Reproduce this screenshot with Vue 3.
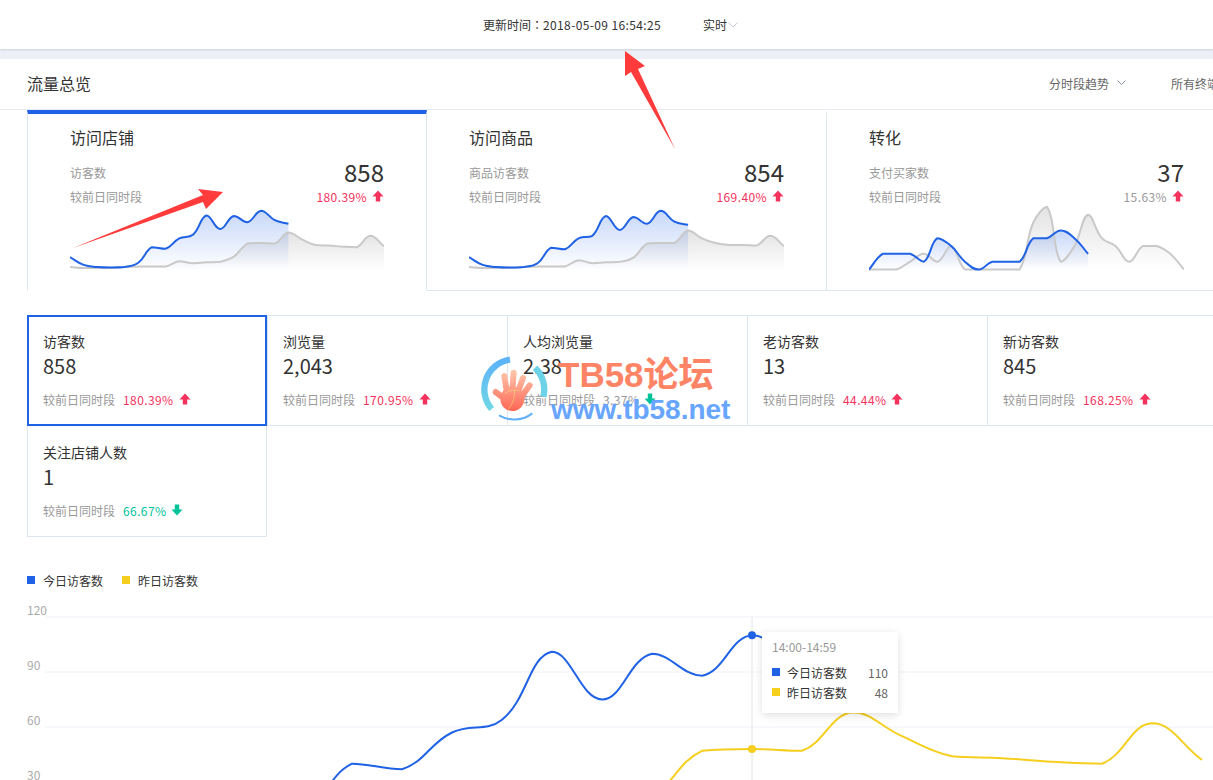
<script setup>
const blue = '#2062e6'
const gray = '#c9c9c9'
const yellow = '#f5ce1e'

// same kind of curve the charts on this page use: control points leaning on the
// neighbours, kept between them so flat runs stay flat
const smoothPath = (pts) => {
  const ctrl = pts.map((p, i) => {
    const prev = pts[i - 1] || p
    const next = pts[i + 1] || p
    const d0 = Math.hypot(p[0] - prev[0], p[1] - prev[1])
    const d1 = Math.hypot(p[0] - next[0], p[1] - next[1])
    const sum = d0 + d1 || 1
    const vx = (next[0] - prev[0]) * 0.42
    const vy = (next[1] - prev[1]) * 0.42
    const clamp = (v, a, b) => Math.min(Math.max(v, Math.min(a, b)), Math.max(a, b))
    return {
      a: [p[0] - (vx * d0) / sum, clamp(p[1] - (vy * d0) / sum, p[1], prev[1])],
      b: [p[0] + (vx * d1) / sum, clamp(p[1] + (vy * d1) / sum, p[1], next[1])],
    }
  })
  let d = `M${pts[0][0]} ${pts[0][1]}`
  for (let i = 1; i < pts.length; i++) {
    const c1 = ctrl[i - 1].b
    const c2 = ctrl[i].a
    d += ` C${c1[0].toFixed(1)} ${c1[1].toFixed(1)} ${c2[0].toFixed(1)} ${c2[1].toFixed(1)} ${pts[i][0].toFixed(1)} ${pts[i][1].toFixed(1)}`
  }
  return d
}

const area = (pts, base) =>
  `${smoothPath(pts)} L${pts[pts.length - 1][0].toFixed(1)} ${base} L${pts[0][0]} ${base} Z`

const sparkPts = (vals, base, scale) =>
  vals.map((v, i) => [(i * 315) / 23, base - v * scale])

const todayVisits = [21, 6, 2, 1, 2, 10, 40, 37, 57, 64, 101, 75, 100, 88, 110, 92, 85]
const prevVisits = [2, 0, 0, 0, 2, 3, 3, 3, 13, 9, 11, 12, 22, 47, 48, 47, 68, 55, 44, 43, 41, 40, 62, 42]

const cards = [
  {
    title: '访问店铺',
    label: '访客数',
    value: '858',
    pct: '180.39%',
    pctRed: true,
    active: true,
    base: 62,
    scale: 0.52,
    today: todayVisits,
    prev: prevVisits,
  },
  {
    title: '访问商品',
    label: '商品访客数',
    value: '854',
    pct: '169.40%',
    pctRed: true,
    active: false,
    base: 62,
    scale: 0.52,
    today: [21, 6, 2, 1, 2, 9, 39, 36, 57, 62, 100, 73, 98, 85, 110, 89, 83],
    prev: [2, 0, 0, 0, 2, 3, 3, 3, 15, 9, 11, 12, 20, 47, 48, 48, 72, 57, 48, 44, 44, 43, 62, 42],
  },
  {
    title: '转化',
    label: '支付买家数',
    value: '37',
    pct: '15.63%',
    pctRed: false,
    active: false,
    base: 63.5,
    scale: 7.83,
    today: [0, 2, 2, 2, 1, 4, 3, 1, 0, 1, 1, 1, 4, 4, 5, 4, 2],
    prev: [0, 0, 0, 1, 2, 1, 3, 0, 0, 0, 0, 0, 6, 8, 1, 3, 7, 4, 3, 1, 3, 3, 2, 0],
  },
].map((c) => {
  const t = sparkPts(c.today, c.base, c.scale)
  const p = sparkPts(c.prev, c.base, c.scale)
  return {
    ...c,
    line: smoothPath(t),
    fill: area(t, 64),
    prevLine: smoothPath(p),
    prevFill: area(p, 64),
  }
})

const metrics = [
  { name: '访客数', value: '858', pct: '180.39%', dir: 'up', active: true },
  { name: '浏览量', value: '2,043', pct: '170.95%', dir: 'up' },
  { name: '人均浏览量', value: '2.38', pct: '3.37%', dir: 'down', muted: true },
  { name: '老访客数', value: '13', pct: '44.44%', dir: 'up' },
  { name: '新访客数', value: '845', pct: '168.25%', dir: 'up' },
  { name: '关注店铺人数', value: '1', pct: '66.67%', dir: 'down' },
]

const chartY = (v) => 237 - v * 1.8333
const chartPts = (vals) => vals.map((v, i) => [52 + i * 50, chartY(v)])
const todayLine = smoothPath(chartPts(todayVisits))
const prevLine = smoothPath(chartPts(prevVisits))
const ticks = [120, 90, 60, 30]
</script>

<template>
  <div class="page">
    <header class="topbar">
      <span class="update">更新时间<span class="colon">：</span><span class="stamp-time">2018-05-09 16:54:25</span></span>
      <span class="mode">实时</span>
      <svg class="chev" width="10" height="6" viewBox="0 0 10 6">
        <path d="M0.5 0.5 L5 5 L9.5 0.5" fill="none" stroke="#c6ccd9" />
      </svg>
    </header>
    <div class="band"></div>

    <div class="sec-head">
      <span class="sec-title">流量总览</span>
      <span class="sec-opt trend">分时段趋势</span>
      <svg class="chev-dark" width="9" height="6" viewBox="0 0 9 6">
        <path d="M0.5 0.5 L4.5 4.5 L8.5 0.5" fill="none" stroke="#8a94a6" />
      </svg>
      <span class="sec-opt terminal">所有终端</span>
    </div>

    <div class="cards">
      <div v-for="(c, i) in cards" :key="c.title" class="card" :class="{ active: c.active }">
        <div class="card-title">{{ c.title }}</div>
        <div class="card-row">
          <span class="muted">{{ c.label }}</span>
          <span class="card-value">{{ c.value }}</span>
        </div>
        <div class="card-row small">
          <span class="muted">较前日同时段</span>
          <span class="pct" :class="c.pctRed ? 'red' : 'muted'">
            <span class="num">{{ c.pct }}</span>
            <svg class="dir" width="12" height="12" viewBox="0 0 12 12">
              <path d="M6 0.5 L11.5 6.5 L8.2 6.5 L8.2 11.5 L3.8 11.5 L3.8 6.5 L0.5 6.5 Z" fill="#f5325c" />
            </svg>
          </span>
        </div>
        <svg class="spark" viewBox="0 0 315 66" preserveAspectRatio="none">
          <defs>
            <linearGradient :id="'gb' + i" x1="0" y1="0" x2="0" y2="1">
              <stop offset="0" stop-color="#2062e6" stop-opacity="0.25" />
              <stop offset="1" stop-color="#2062e6" stop-opacity="0" />
            </linearGradient>
            <linearGradient :id="'gg' + i" x1="0" y1="0" x2="0" y2="1">
              <stop offset="0" stop-color="#000" stop-opacity="0.11" />
              <stop offset="1" stop-color="#000" stop-opacity="0" />
            </linearGradient>
          </defs>
          <path :d="c.prevFill" :fill="`url(#gg${i})`" />
          <path :d="c.fill" :fill="`url(#gb${i})`" />
          <path :d="c.prevLine" fill="none" :stroke="gray" stroke-width="2" />
          <path :d="c.line" fill="none" :stroke="blue" stroke-width="2" />
        </svg>
      </div>
    </div>

    <div class="metrics">
      <div
        v-for="(m, i) in metrics"
        :key="m.name"
        class="metric"
        :class="{ active: m.active, first: i === 0 || i === 5 }"
      >
        <div class="metric-name">{{ m.name }}</div>
        <div class="metric-value">{{ m.value }}</div>
        <div class="metric-cmp">
          <span class="muted">较前日同时段</span>
          <span class="metric-pct num" :class="m.muted ? 'muted' : m.dir === 'up' ? 'red' : 'green'">{{ m.pct }}</span>
          <svg v-if="m.dir === 'up'" class="dir" width="12" height="12" viewBox="0 0 12 12">
            <path d="M6 0.5 L11.5 6.5 L8.2 6.5 L8.2 11.5 L3.8 11.5 L3.8 6.5 L0.5 6.5 Z" fill="#f5325c" />
          </svg>
          <svg v-else class="dir" width="12" height="12" viewBox="0 0 12 12">
            <path d="M6 11.5 L11.5 5.5 L8.2 5.5 L8.2 0.5 L3.8 0.5 L3.8 5.5 L0.5 5.5 Z" fill="#00c39a" />
          </svg>
        </div>
      </div>
    </div>

    <div class="legend">
      <i class="sq sq-blue"></i><span class="legend-text">今日访客数</span>
      <i class="sq sq-yellow second"></i><span class="legend-text">昨日访客数</span>
    </div>

    <div class="chart">
      <svg width="1213" height="180" viewBox="0 0 1213 180">
        <g v-for="t in ticks" :key="t">
          <line x1="45" :y1="chartY(t)" x2="1213" :y2="chartY(t)" stroke="#f5f6fb" stroke-width="1.5" />
          <text x="27" :y="chartY(t) - 2.5" class="tick">{{ t }}</text>
        </g>
        <line x1="752" y1="17" x2="752" y2="180" stroke="#e4e4e4" />
        <path :d="prevLine" fill="none" :stroke="yellow" stroke-width="2" />
        <path :d="todayLine" fill="none" :stroke="blue" stroke-width="2" />
        <circle cx="752" :cy="chartY(110)" r="4" :fill="blue" />
        <circle cx="752" :cy="chartY(48)" r="4" :fill="yellow" />
      </svg>
      <div class="tip">
        <div class="tip-title">14:00-14:59</div>
        <div class="tip-row">
          <i class="sq sq-blue"></i><span class="tip-name">今日访客数</span><span class="tip-val">110</span>
        </div>
        <div class="tip-row">
          <i class="sq sq-yellow"></i><span class="tip-name">昨日访客数</span><span class="tip-val">48</span>
        </div>
      </div>
    </div>

    <!-- red arrows drawn on top of the screenshot -->
    <svg class="marks" width="1213" height="780" viewBox="0 0 1213 780">
      <path d="M73 248 L203 195 L198 189 L223 192 L206 209 L203 202 Z" fill="#ff3b3b" />
      <path d="M625 51 L645 66 L638 69 L675 149 L631 72 L625 76 Z" fill="#ff3b3b" />
    </svg>

    <div class="stamp">
      <svg class="stamp-logo" width="90" height="80" viewBox="0 0 270 240">
        <defs>
          <linearGradient id="ring" x1="0" y1="0" x2="0" y2="1">
            <stop offset="0" stop-color="#5db3f8" />
            <stop offset="1" stop-color="#70d6e6" />
          </linearGradient>
          <linearGradient id="hand" gradientUnits="userSpaceOnUse" x1="110" y1="60" x2="110" y2="185">
            <stop offset="0" stop-color="#ffc9ae" />
            <stop offset="1" stop-color="#ff6453" />
          </linearGradient>
        </defs>
        <path d="M105 29 A90 90 0 0 0 50 177" fill="none" stroke="url(#ring)" stroke-width="19" />
        <path d="M180 53 A90 90 0 0 1 205 140" fill="none" stroke="#6cd2e8" stroke-width="19" />
        <path d="M72 196 A90 90 0 0 0 172 190" fill="none" stroke="#5fb0f8" stroke-width="6" />
        <g stroke="url(#hand)" stroke-width="18" stroke-linecap="round" fill="none">
          <path d="M100 155 L62 126" />
          <path d="M97 135 L88 78" />
          <path d="M112 125 L116 68" />
          <path d="M128 128 L144 84" />
          <path d="M138 142 L164 106" />
        </g>
        <ellipse cx="112" cy="146" rx="36" ry="37" fill="url(#hand)" />
        <path d="M90 130 Q110 116 134 122 M100 178 Q122 150 118 118" fill="none" stroke="#ffd27a" stroke-width="2" />
      </svg>
      <div class="stamp-cn">TB58论坛</div>
      <div class="stamp-url">www.tb58.net</div>
    </div>
  </div>
</template>

<style>
html,
body {
  margin: 0;
  overflow: hidden;
  background: #fff;
}
</style>

<style scoped>
.page {
  position: relative;
  width: 1213px;
  height: 780px;
  overflow: hidden;
  font-family: "Noto Sans CJK SC", "Noto Sans", sans-serif;
  font-size: 12px;
  color: #333;
  background: #fff;
}

.muted {
  color: #999;
}

.red {
  color: #f5325c;
}

.green {
  color: #00c39a;
}

/* the small digits run a little wider than the font gives */
.num {
  letter-spacing: 0.4px;
}

/* TOP BAR */
.topbar {
  position: relative;
  height: 49px;
  display: flex;
  align-items: center;
  padding-left: 483px;
  background: #fff;
  box-shadow: 0 1px 2px rgba(0, 0, 0, 0.12);
}

.colon {
  font-family: "Noto Sans CJK TC", sans-serif;
}

.stamp-time {
  letter-spacing: 0.37px;
}

.mode {
  margin-left: 42px;
}

.chev {
  flex: none;
  margin-left: 1px;
}

.band {
  height: 10px;
  background: #eceff5;
}

/* SECTION HEAD */
.sec-head {
  height: 48px;
  padding: 0 0 2px 27px;
  display: flex;
  align-items: center;
  border-bottom: 1px solid #e8ecf2;
  white-space: nowrap;
}

.sec-title {
  font-size: 16px;
}

.sec-opt {
  flex: none;
  color: #666;
}

.trend {
  margin-left: 958px;
}

.chev-dark {
  flex: none;
  margin-left: 8px;
}

.terminal {
  margin-left: 45px;
}

/* CARDS */
.cards {
  display: flex;
  margin-left: 27px;
}

.card {
  flex: 0 0 400px;
  box-sizing: border-box;
  height: 181px;
  padding: 11px 42px 0;
  border-top: 4px solid transparent;
  border-right: 1px solid #dde5ef;
  border-bottom: 1px solid #dde5ef;
}

.card.active {
  border-top-color: #2062e6;
  border-left: 1px solid #dde5ef;
  border-bottom-color: transparent;
}

.card-title {
  font-size: 16px;
  line-height: 24px;
}

.card-row {
  display: flex;
  justify-content: space-between;
  align-items: center;
  height: 30px;
  margin-top: 8px;
}

.card-row.small {
  height: 18px;
  margin-top: 0;
}

.card-value {
  font-size: 24px;
  line-height: 30px;
}

.pct {
  display: flex;
  align-items: center;
  gap: 5px;
}

.dir {
  flex: none;
}

.spark {
  display: block;
  width: 100%;
  height: 66px;
  margin-top: 1px;
}

/* METRICS */
.metrics {
  display: grid;
  grid-template-columns: repeat(5, 240px);
  grid-auto-rows: 111px;
  margin: 24px 0 0 27px;
}

.metric {
  box-sizing: border-box;
  margin-right: -1px;
  padding: 15px 15px 0;
  border: 1px solid #dde5ef;
}

.metric:nth-child(6) {
  margin-right: 0;
  border-top-color: transparent;
}

.metric.active {
  position: relative;
  z-index: 1;
  margin-right: 0;
  border-color: #2062e6;
  box-shadow: inset 0 0 0 1px #2062e6;
}

.metric-name {
  font-size: 14px;
  line-height: 20px;
}

.metric-value {
  font-size: 20px;
  line-height: 28px;
  margin-top: 1px;
}

.metric-cmp {
  display: flex;
  align-items: center;
  height: 18px;
  margin-top: 10px;
}

.metric-pct {
  margin: 0 5px 0 8px;
}

/* LEGEND */
.legend {
  display: flex;
  align-items: center;
  height: 20px;
  margin: 33px 0 0 27px;
}

.sq {
  flex: none;
  width: 8px;
  height: 8px;
}

.sq-blue {
  background: #2062e6;
}

.sq-yellow {
  background: #f5ce1e;
}

.sq.second {
  margin-left: 19px;
}

.legend-text {
  margin-left: 8px;
}

/* CHART */
.chart {
  position: relative;
  height: 180px;
  margin-top: 10px;
}

.chart svg {
  display: block;
}

.tick {
  font-size: 12px;
  fill: #aaa;
}

.tip {
  position: absolute;
  left: 762px;
  top: 32px;
  width: 136px;
  box-sizing: border-box;
  padding: 6px 10px 11px;
  background: #fff;
  box-shadow: 0 2px 8px rgba(0, 0, 0, 0.13);
}

.tip-title {
  line-height: 18px;
  margin-bottom: 6px;
  color: #999;
}

.tip-row {
  display: flex;
  align-items: center;
  height: 20px;
}

.tip-name {
  margin-left: 7px;
}

.tip-val {
  margin-left: auto;
  color: #666;
}

/* OVERLAYS */
.marks {
  position: absolute;
  left: 0;
  top: 0;
  pointer-events: none;
}

.stamp {
  position: absolute;
  left: 475px;
  top: 350px;
  width: 270px;
  height: 80px;
  pointer-events: none;
  font-family: "Liberation Sans", "Noto Sans CJK SC", sans-serif;
  font-weight: 700;
}

.stamp-logo {
  position: absolute;
  left: 0;
  top: 0;
}

.stamp-cn {
  position: absolute;
  left: 83px;
  top: 4px;
  font-size: 35px;
  line-height: 42px;
  color: #ff8466;
  white-space: nowrap;
}

.stamp-url {
  position: absolute;
  left: 76px;
  top: 44px;
  font-size: 28px;
  line-height: 32px;
  color: #68a5ff;
  white-space: nowrap;
}
</style>
